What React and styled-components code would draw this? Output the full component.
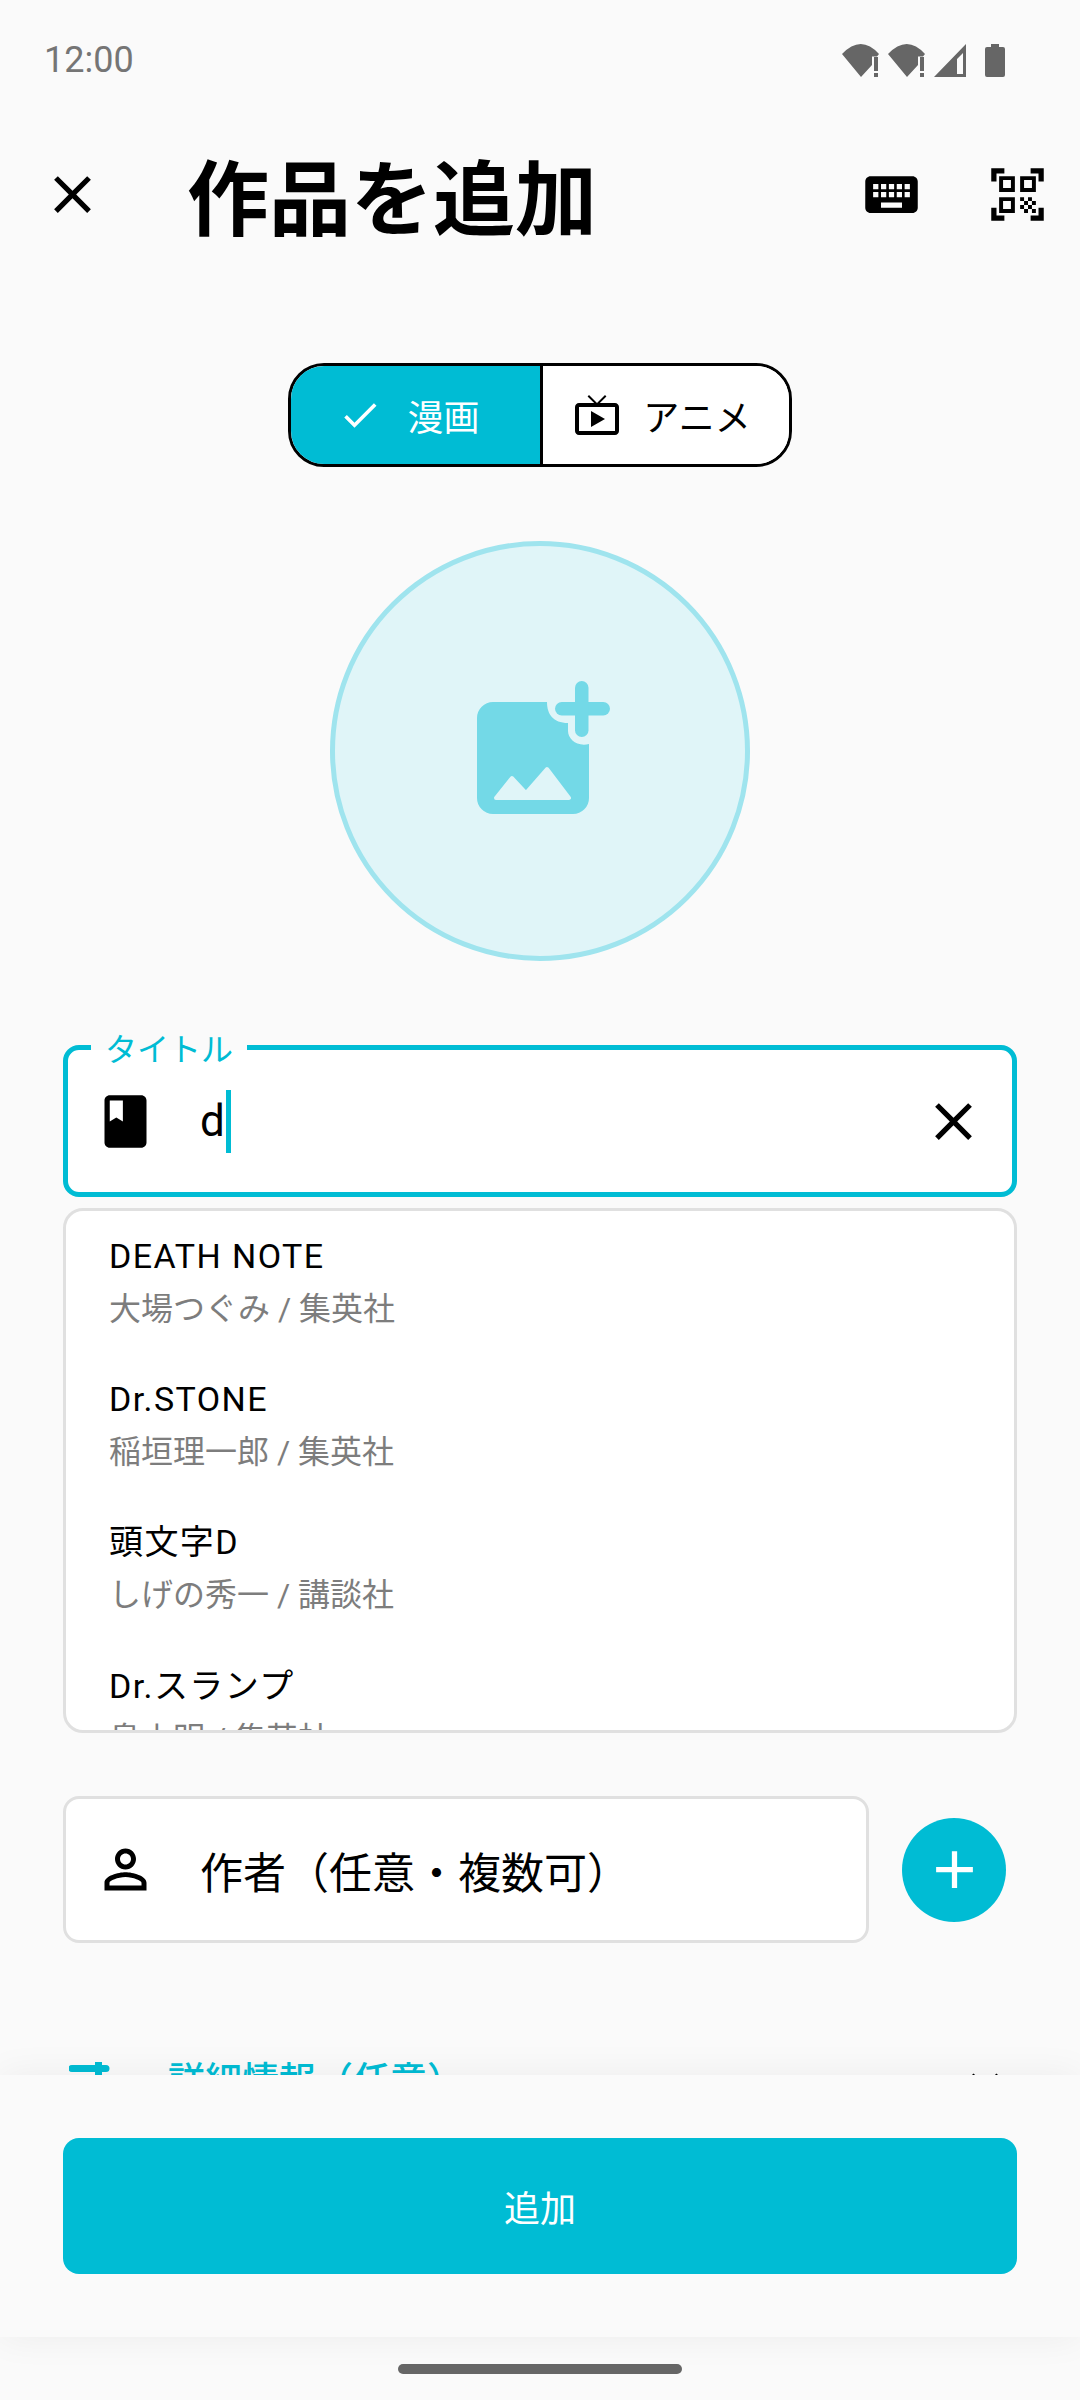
import React from 'react';
import styled, { createGlobalStyle } from 'styled-components';

const CYAN = '#00bcd4';
const FONT = 'Roboto, "Noto Sans CJK JP", sans-serif';

const GlobalStyle = createGlobalStyle`
    html, body {
        margin: 0;
        padding: 0;
        background: #fafafa;
    }
    * {
        box-sizing: border-box;
    }
`
const Page = styled.div`
    width: 1080px;
    height: 2400px;
    display: flex;
    flex-direction: column;
    overflow: hidden;
    background: #fafafa;
    color: #000;
    font-family: ${FONT};
`
const Scroller = styled.main`
    flex: 1;
    min-height: 0;
    overflow: hidden;
`
const StatusBar = styled.div`
    height: 120px;
    padding: 0 75px 0 44px;
    display: flex;
    align-items: center;
    justify-content: space-between;
`
const Time = styled.span`
    font-size: 36px;
    color: #757575;
`
const StatusIcons = styled.div`
    display: flex;
    align-items: center;
    gap: 9px;
`
const Glyph = styled.svg`
    display: block;
    flex: none;
    fill: ${props => props.$color || 'currentColor'};
`
const BatterySlot = styled.span`
    margin-left: 10px;
`
const Toolbar = styled.header`
    height: 148px;
    padding: 0 31px 0 41px;
    display: flex;
    align-items: center;
`
const Title = styled.h1`
    margin: 13px 0 0 83px;
    flex: 1;
    font-size: 82px;
    font-weight: 700;
    line-height: 100px;
`
const ToolbarActions = styled.div`
    display: flex;
    gap: 63px;
`
const Segments = styled.div`
    width: 504px;
    height: 104px;
    margin: 95px auto 0;
    display: flex;
    border: 3px solid #000;
    border-radius: 36px;
    overflow: hidden;
    background: #fff;
`
const Segment = styled.button`
    flex: 0 0 50%;
    padding: 0 ${props => props.$inset}px 0 0;
    border: none;
    display: flex;
    align-items: center;
    justify-content: center;
    gap: ${props => props.$gap}px;
    font-family: inherit;
    font-size: 36px;
    background: ${props => (props.$active ? CYAN : '#fff')};
    color: ${props => (props.$active ? '#fff' : '#000')};
    & + & {
        border-left: 3px solid #000;
    }
`
const Cover = styled.div`
    width: 420px;
    height: 420px;
    margin: 74px auto 0;
    padding: 0 0 8px 6px;
    display: flex;
    align-items: center;
    justify-content: center;
    border: 5px solid #9fe4ee;
    border-radius: 50%;
    background: #e0f5f8;
`
const Form = styled.div`
    padding: 84px 63px 0;
`
const TitleField = styled.div`
    position: relative;
    height: 152px;
    padding: 0 25px 0 26px;
    display: flex;
    align-items: center;
    border: 5px solid ${CYAN};
    border-radius: 16px;
    background: #fff;
`
const FloatingLabel = styled.label`
    position: absolute;
    left: 23px;
    top: -20px;
    padding: 0 14px;
    font-size: 32px;
    line-height: 40px;
    color: ${CYAN};
    background: linear-gradient(#fafafa 50%, #fff 50%);
`
const TypedText = styled.span`
    margin-left: 43px;
    font-size: 44px;
`
const Caret = styled.span`
    width: 5px;
    height: 63px;
    margin-left: 1px;
    background: ${CYAN};
`
const ClearButton = styled.span`
    margin-left: auto;
    margin-right: 2px;
`
const Suggestions = styled.ul`
    height: 525px;
    margin: 11px 0 0;
    padding: 20px 0 0 43px;
    list-style: none;
    overflow: hidden;
    border: 3px solid #e0e0e0;
    border-radius: 20px;
    background: #fff;
`
const Suggestion = styled.li`
    height: 143.2px;
`
const SuggestionName = styled.div`
    font-size: 34px;
    line-height: 50px;
    letter-spacing: 1.4px;
`
const SuggestionMeta = styled.div`
    margin-top: 3px;
    font-size: 32px;
    line-height: 50px;
    color: #7d7d7d;
`
const AuthorRow = styled.div`
    margin-top: 63px;
    display: flex;
    align-items: center;
    gap: 33px;
    padding-right: 11px;
`
const AuthorField = styled.div`
    flex: 1;
    height: 147px;
    padding: 0 27px 0 28px;
    display: flex;
    align-items: center;
    border: 3px solid #e0e0e0;
    border-radius: 16px;
    background: #fff;
`
const Placeholder = styled.span`
    margin-left: 43px;
    font-size: 43px;
`
const Fab = styled.button`
    width: 104px;
    height: 104px;
    padding: 0;
    display: flex;
    align-items: center;
    justify-content: center;
    border: none;
    border-radius: 50%;
    background: ${CYAN};
    color: #fff;
`
const DetailsRow = styled.div`
    margin-top: 115px;
    padding: 0 65px 0 69px;
    display: flex;
    align-items: center;
    height: 48px;
    color: ${CYAN};
`
const DetailsLabel = styled.span`
    flex: 1;
    margin-left: 55px;
    font-size: 37px;
    font-weight: 500;
    line-height: 48px;
`
const ChevronSlot = styled.span`
    margin-top: -1px;
`
const Sheet = styled.footer`
    position: relative;
    z-index: 1;
    flex: none;
    height: 262px;
    padding: 63px 63px 0;
    background: #fafafa;
    box-shadow: 0 0 36px rgba(0, 0, 0, 0.06);
`
const SubmitButton = styled.button`
    width: 100%;
    height: 136px;
    border: none;
    border-radius: 16px;
    background: ${CYAN};
    color: #fff;
    font-family: inherit;
    font-size: 36px;
`
const NavArea = styled.div`
    flex: none;
    height: 63px;
    padding-top: 27px;
`
const HomePill = styled.div`
    width: 284px;
    height: 10px;
    margin: 0 auto;
    border-radius: 5px;
    background: #666;
`

const Icon = ({ d, size = 63, color }) => (
    <Glyph viewBox="0 0 24 24" width={size} height={size} $color={color}><path d={d} /></Glyph>
)

const CLOSE = 'M19 6.41L17.59 5 12 10.59 6.41 5 5 6.41 10.59 12 5 17.59 6.41 19 12 13.41 17.59 19 19 17.59 13.41 12z'
const KEYBOARD = 'M20 5H4c-1.1 0-1.99.9-1.99 2L2 17c0 1.1.9 2 2 2h16c1.1 0 2-.9 2-2V7c0-1.1-.9-2-2-2zm-9 3h2v2h-2V8zm0 3h2v2h-2v-2zM8 8h2v2H8V8zm0 3h2v2H8v-2zm-1 2H5v-2h2v2zm0-3H5V8h2v2zm9 7H8v-2h8v2zm0-4h-2v-2h2v2zm0-3h-2V8h2v2zm3 3h-2v-2h2v2zm0-3h-2V8h2v2z'
const QR = 'M9.5 6.5v3h-3v-3h3M11 5H5v6h6V5zm-1.5 9.5v3h-3v-3h3M11 13H5v6h6v-6zm6.5-6.5v3h-3v-3h3M19 5h-6v6h6V5zm-6 8h1.5v1.5H13V13zm1.5 1.5H16V16h-1.5v-1.5zM16 13h1.5v1.5H16V13zm-3 3h1.5v1.5H13V16zm1.5 1.5H16V19h-1.5v-1.5zM16 16h1.5v1.5H16V16zm1.5-1.5H19V16h-1.5v-1.5zm0 3H19V19h-1.5v-1.5zM22 7h-2V4h-3V2h5v5zm0 15v-5h-2v3h-3v2h5zM2 22h5v-2H4v-3H2v5zM2 2v5h2V4h3V2H2z'
const CHECK = 'M9 16.17L4.83 12l-1.42 1.41L9 19 21 7l-1.41-1.41z'
const TV = 'M21 6h-7.59l3.29-3.29L16 2l-4 4-4-4-.71.71L10.59 6H3c-1.1 0-2 .89-2 2v12c0 1.1.9 2 2 2h18c1.1 0 2-.9 2-2V8c0-1.11-.9-2-2-2zm0 14H3V8h18v12zM9 10v8l7-4z'
const BOOK = 'M18 2H6c-1.1 0-2 .9-2 2v16c0 1.1.9 2 2 2h12c1.1 0 2-.9 2-2V4c0-1.1-.9-2-2-2zM6 4h5v8l-2.5-1.5L6 12V4z'
const PERSON = 'M12 5.9c1.16 0 2.1.94 2.1 2.1s-.94 2.1-2.1 2.1S9.9 9.16 9.9 8s.94-2.1 2.1-2.1m0 9c2.97 0 6.1 1.46 6.1 2.1v1.1H5.9V17c0-.64 3.13-2.1 6.1-2.1M12 4C9.79 4 8 5.79 8 8s1.79 4 4 4 4-1.79 4-4-1.79-4-4-4zm0 9c-2.67 0-8 1.34-8 4v3h16v-3c0-2.66-5.33-4-8-4z'
const PLUS = 'M19 13h-6v6h-2v-6H5v-2h6V5h2v6h6v2z'
const CHEVRON = 'M16.59 8.59L12 13.17 7.41 8.59 6 10l6 6 6-6z'

const WifiAlert = () => (
    <Glyph viewBox="0 0 37 33" width={37} height={33} $color="#666">
        <path d="M0 10Q19-10 37 10L35 12.5H30V21L19 33Z" />
        <path d="M32 13h4v14h-4zM32 29h4v4h-4z" />
    </Glyph>
)
const Signal = () => (
    <Glyph viewBox="0 0 32 33" width={32} height={33} $color="#666">
        <path fillRule="evenodd" d="M32 0V33H0ZM23 15L29 9V30H23Z" />
    </Glyph>
)
const Battery = () => (
    <Glyph viewBox="0 0 20 33" width={20} height={33} $color="#666">
        <path d="M6 0h8v3h4a2 2 0 0 1 2 2v26a2 2 0 0 1-2 2H2a2 2 0 0 1-2-2V5a2 2 0 0 1 2-2h4z" />
    </Glyph>
)
const AddImage = () => (
    <Glyph viewBox="0 0 133 133" width={133} height={133} $color="#73d9e7">
        <path d="M16 21H70C70 33 76 42 91 42V50C91 58 100 66 112 63V117a16 16 0 0 1-16 16H16a16 16 0 0 1-16-16V37a16 16 0 0 1 16-16z" />
        <path d="M19 117L35 97L49 112L70 88L92 117Z" fill="#e0f5f8" stroke="#e0f5f8" strokeWidth="4" strokeLinejoin="round" />
        <rect x="78" y="21" width="55" height="13.5" rx="6.75" />
        <rect x="98" y="0" width="13.5" height="56" rx="6.75" />
    </Glyph>
)
const DetailsIcon = () => (
    <Glyph viewBox="0 0 44 44" width={44} height={44}>
        <path d="M3 5h34a3.5 3.5 0 0 1 0 7H33v32h-7V12H3a3.5 3.5 0 0 1 0-7z" />
        <path d="M26 2h7v4h-7z" />
    </Glyph>
)

const suggestions = [
    { name: 'DEATH NOTE', meta: '大場つぐみ / 集英社' },
    { name: 'Dr.STONE', meta: '稲垣理一郎 / 集英社' },
    { name: '頭文字D', meta: 'しげの秀一 / 講談社' },
    { name: 'Dr.スランプ', meta: '鳥山明 / 集英社' },
]

const App = () => {
    return (
        <Page>
            <GlobalStyle />
            <Scroller>
                <StatusBar>
                    <Time>12:00</Time>
                    <StatusIcons>
                        <WifiAlert />
                        <WifiAlert />
                        <Signal />
                        <BatterySlot><Battery /></BatterySlot>
                    </StatusIcons>
                </StatusBar>
                <Toolbar>
                    <Icon d={CLOSE} />
                    <Title>作品を追加</Title>
                    <ToolbarActions>
                        <Icon d={KEYBOARD} />
                        <Icon d={QR} />
                    </ToolbarActions>
                </Toolbar>
                <Segments>
                    <Segment $active $gap={25} $inset={13}>
                        <Icon d={CHECK} size={44} />
                        漫画
                    </Segment>
                    <Segment $gap={22} $inset={8}>
                        <Icon d={TV} size={48} />
                        アニメ
                    </Segment>
                </Segments>
                <Cover>
                    <AddImage />
                </Cover>
                <Form>
                    <TitleField>
                        <FloatingLabel>タイトル</FloatingLabel>
                        <Icon d={BOOK} />
                        <TypedText>d</TypedText>
                        <Caret />
                        <ClearButton><Icon d={CLOSE} /></ClearButton>
                    </TitleField>
                    <Suggestions>
                        {suggestions.map(item => (
                            <Suggestion key={item.name}>
                                <SuggestionName>{item.name}</SuggestionName>
                                <SuggestionMeta>{item.meta}</SuggestionMeta>
                            </Suggestion>
                        ))}
                    </Suggestions>
                    <AuthorRow>
                        <AuthorField>
                            <Icon d={PERSON} />
                            <Placeholder>作者（任意・複数可）</Placeholder>
                        </AuthorField>
                        <Fab><Icon d={PLUS} /></Fab>
                    </AuthorRow>
                </Form>
                <DetailsRow>
                    <DetailsIcon />
                    <DetailsLabel>詳細情報（任意）</DetailsLabel>
                    <ChevronSlot><Icon d={CHEVRON} size={60} color="#000" /></ChevronSlot>
                </DetailsRow>
            </Scroller>
            <Sheet>
                <SubmitButton>追加</SubmitButton>
            </Sheet>
            <NavArea>
                <HomePill />
            </NavArea>
        </Page>
    )
}
export default App
